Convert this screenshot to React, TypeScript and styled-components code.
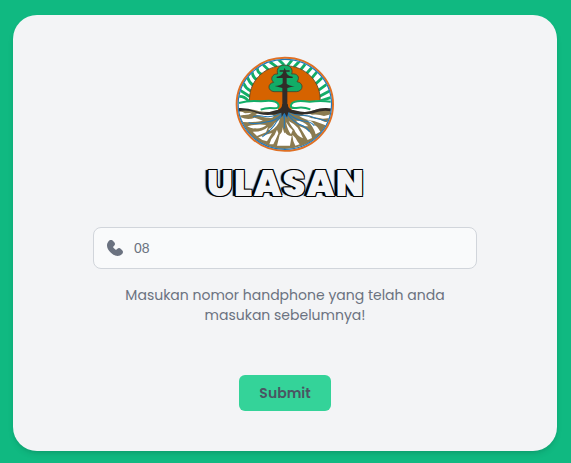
import React from "react";
import styled, { createGlobalStyle } from "styled-components";

const GlobalStyle = createGlobalStyle`
  * { box-sizing: border-box; }
  body { margin: 0; background: #10b981; font-family: Poppins, Inter, sans-serif; }
`;

const Page = styled.main`
  height: 463px;
  padding: 15px 14px 12px 13px;
  overflow: hidden;
`;

const Card = styled.form`
  height: 436px;
  padding-top: 35px;
  display: flex;
  flex-direction: column;
  align-items: center;
  border-radius: 24px;
  background: #f3f4f6;
  box-shadow: 0 4px 6px -1px rgba(0, 0, 0, 0.1), 0 2px 4px -2px rgba(0, 0, 0, 0.1);
`;

const Logo = styled.svg`
  display: block;
  width: 110px;
  height: 106px;
  flex: none;
`;

const Title = styled.h1`
  margin: 6px 0 0;
  padding-left: 2px;
  height: 44px;
  font: 900 36px/44px Poppins, Inter, sans-serif;
  letter-spacing: 1.3px;
  color: #f3f4f6;
  white-space: nowrap;
  text-shadow: -1px -1px 0 #000, 1px -1px 0 #000, -1px 1px 0 #000, 1px 1px 0 #000,
    -2px 0 0 #000, -3px 0 1px #000;
`;

const Field = styled.label`
  width: 384px;
  height: 42px;
  margin-top: 21px;
  padding: 0 13px;
  display: flex;
  align-items: center;
  gap: 11px;
  border: 1px solid #d1d5db;
  border-radius: 8px;
  background: #f9fafb;
`;

const PhoneIcon = styled.svg`
  width: 16px;
  height: 16px;
  flex: none;
  fill: #6b7280;
`;

const Input = styled.input`
  flex: 1;
  min-width: 0;
  height: 20px;
  padding: 0 0 1px;
  border: 0;
  outline: 0;
  background: transparent;
  color: #6b7280;
  font: 400 14px/19px "Liberation Sans", Arial, sans-serif;
  &::placeholder { color: #6b7280; opacity: 1; }
`;

const Hint = styled.p`
  margin: 16px 0 0;
  width: 340px;
  text-align: center;
  color: #6b7280;
  font-size: 14px;
  line-height: 20px;
`;

const Submit = styled.button`
  width: 92px;
  height: 36px;
  margin-top: 50px;
  padding: 0;
  border: 0;
  border-radius: 6px;
  background: #34d399;
  color: #4b5563;
  font: 600 14px/20px Poppins, Inter, sans-serif;
`;

const TreeLogo = () => (
  <Logo viewBox="0 0 330 318" role="img" aria-label="Logo">
    <defs>
      <clipPath id="disc"><ellipse cx="164.5" cy="163" rx="139" ry="134" /></clipPath>
    </defs>
    <ellipse cx="164.5" cy="163" rx="145" ry="140" fill="#fff" />
    <g clipPath="url(#disc)">
      <path
        d="M29 139Q43 139 54 151M31 121L57 138M42 102Q47 115 61 122M53 83Q57 97 70 107M67 69Q69 83 83 91M82 56Q83 70 98 74M101 46L115 59M120 36L138 49M146 29L160 43M187 29L175 44M207 35L194 49M227 41L214 57M247 51L231 69M264 62L244 86M279 81L256 103M290 103L265 121M300 122L269 139M304 142L274 152"
        fill="none" stroke="#12ad67" strokeWidth="8.5" strokeLinecap="round"
      />
      <path d="M59 159C53 96 101 47 164 47S276 96 270 159Z" fill="#d66300" stroke="#594124" strokeWidth="2.5" />
      <path d="M24 157Q57 149 94 154Q133 149 145 166L151 191H178L181 168Q196 149 238 155Q275 149 308 154V190H24Z" fill="#fff" />
      <path d="M144 155H185V187H144Z" fill="#d66300" />
      <path d="M27 159Q58 150 93 154Q138 148 145 163Q149 176 132 175Q111 172 92 179M302 155Q272 151 239 155Q191 148 184 163Q178 176 199 174Q220 170 241 178" fill="#fff" stroke="#12ad67" strokeWidth="6" />
      <g transform="translate(15 138)">
        <path d="M2 45Q43 34 73 46Q116 51 139 43H164Q193 54 229 45Q265 30 300 45V180H0Z" fill="#8b7b50" />
        <g fill="#fff">
          <path d="M4 48Q20 43 30 52L51 50Q42 58 25 57L6 61Z" />
          <path d="M61 55Q83 45 112 56Q121 62 108 66Q84 66 61 55Z" />
          <path d="M17 64Q39 74 59 65Q72 70 84 74Q56 80 24 78Z" />
          <path d="M37 91Q66 83 94 87Q81 99 60 97Q49 99 37 91Z" />
          <path d="M53 107Q82 108 99 93L93 109L66 120Z" />
          <path d="M119 81Q130 75 135 68Q130 92 105 106L100 99Q110 96 119 81Z" />
          <path d="M70 124Q94 115 111 111L96 136L82 132Z" />
          <path d="M109 129Q120 118 126 101L130 112Q125 126 115 145H103Z" />
          <path d="M134 116Q143 109 143 93Q148 118 150 109Q156 120 170 120L165 149H126Z" />
          <path d="M153 78Q162 94 173 103L168 115Q157 101 153 78Z" />
          <path d="M161 75Q179 84 188 95Q197 109 204 127Q183 117 178 101Q171 95 161 75Z" />
          <path d="M172 116Q181 123 188 137L194 145L181 149Q173 135 172 116Z" />
          <path d="M193 91Q215 96 229 116L231 126L218 132Q205 110 193 91Z" />
          <path d="M183 74Q206 74 220 91L208 91Q193 87 183 74Z" />
          <path d="M217 73Q233 74 239 88Q247 91 256 107L242 115Q237 95 217 73Z" />
          <path d="M193 61Q213 57 230 67Q250 66 270 78L286 79L279 91Q260 83 237 75Q213 73 193 61Z" />
          <path d="M195 50Q217 48 231 56Q252 54 267 60L294 53L291 65L264 68Q244 65 222 61Q208 59 195 50Z" />
        </g>
        <path
          d="M142 47Q119 66 85 61Q71 57 55 62M144 49Q125 76 93 78Q63 86 42 80M142 58Q125 73 117 89Q99 111 83 122M148 47V96M154 49Q173 79 198 87Q213 92 223 106M158 51Q182 72 205 75Q225 75 237 88M158 46Q180 58 203 58Q224 58 242 67L273 74M160 45Q188 46 208 52"
          fill="none" stroke="#2478b8" strokeWidth="3.2" strokeLinecap="round" strokeLinejoin="round"
        />
        <path d="M137 48Q147 57 146 70L151 61L158 70Q154 57 166 48Z" fill="#2478b8" />
      </g>
      <path d="M24 174Q52 172 78 184Q103 193 137 181Q155 180 157 162H173Q174 179 194 181Q226 191 251 181Q277 171 307 176V185Q278 178 249 190Q207 199 175 187L171 202L163 188L155 201L154 188Q121 199 88 192Q54 176 24 185Z" fill="#312c28" />
      <path d="M157 125H132C113 123 111 101 131 97C119 88 127 70 143 72C138 57 148 45 164 45S190 57 185 72C201 69 212 82 201 95C222 98 221 124 199 125Z" fill="#12ad67" stroke="#45422e" strokeWidth="2.5" />
      <path d="M164 53L167 61H179V65H168Q172 79 188 80V84H170V101Q177 108 194 108L172 114V188H157V114L134 108Q151 108 158 100V84H140V80Q156 78 160 65H149V61H161Z" fill="#312c28" />
    </g>
    <ellipse cx="164.5" cy="163" rx="144.5" ry="139.5" fill="none" stroke="#df7024" strokeWidth="6" />
    <ellipse cx="164.5" cy="163" rx="140" ry="135" fill="none" stroke="#2478b8" strokeWidth="3.5" />
  </Logo>
);

export default function App() {
  return (
    <>
      <GlobalStyle />
      <Page>
        <Card onSubmit={(event) => event.preventDefault()}>
          <TreeLogo />
          <Title>ULASAN</Title>
          <Field>
            <PhoneIcon viewBox="0 0 18 18" aria-hidden="true">
              <path d="M18 13.446a3.02 3.02 0 0 0-.946-1.985l-1.4-1.4a3.054 3.054 0 0 0-4.218 0l-.7.7a.983.983 0 0 1-1.39 0l-2.1-2.1a.983.983 0 0 1 0-1.389l.7-.7a2.98 2.98 0 0 0 0-4.217l-1.4-1.4a2.824 2.824 0 0 0-4.218 0c-3.619 3.619-3 8.229 1.752 12.979C6.785 16.639 9.45 18 11.912 18a7.175 7.175 0 0 0 5.139-2.325A2.9 2.9 0 0 0 18 13.446Z" />
            </PhoneIcon>
            <Input type="tel" placeholder="08" />
          </Field>
          <Hint>Masukan nomor handphone yang telah anda masukan sebelumnya!</Hint>
          <Submit type="submit">Submit</Submit>
        </Card>
      </Page>
    </>
  );
}
